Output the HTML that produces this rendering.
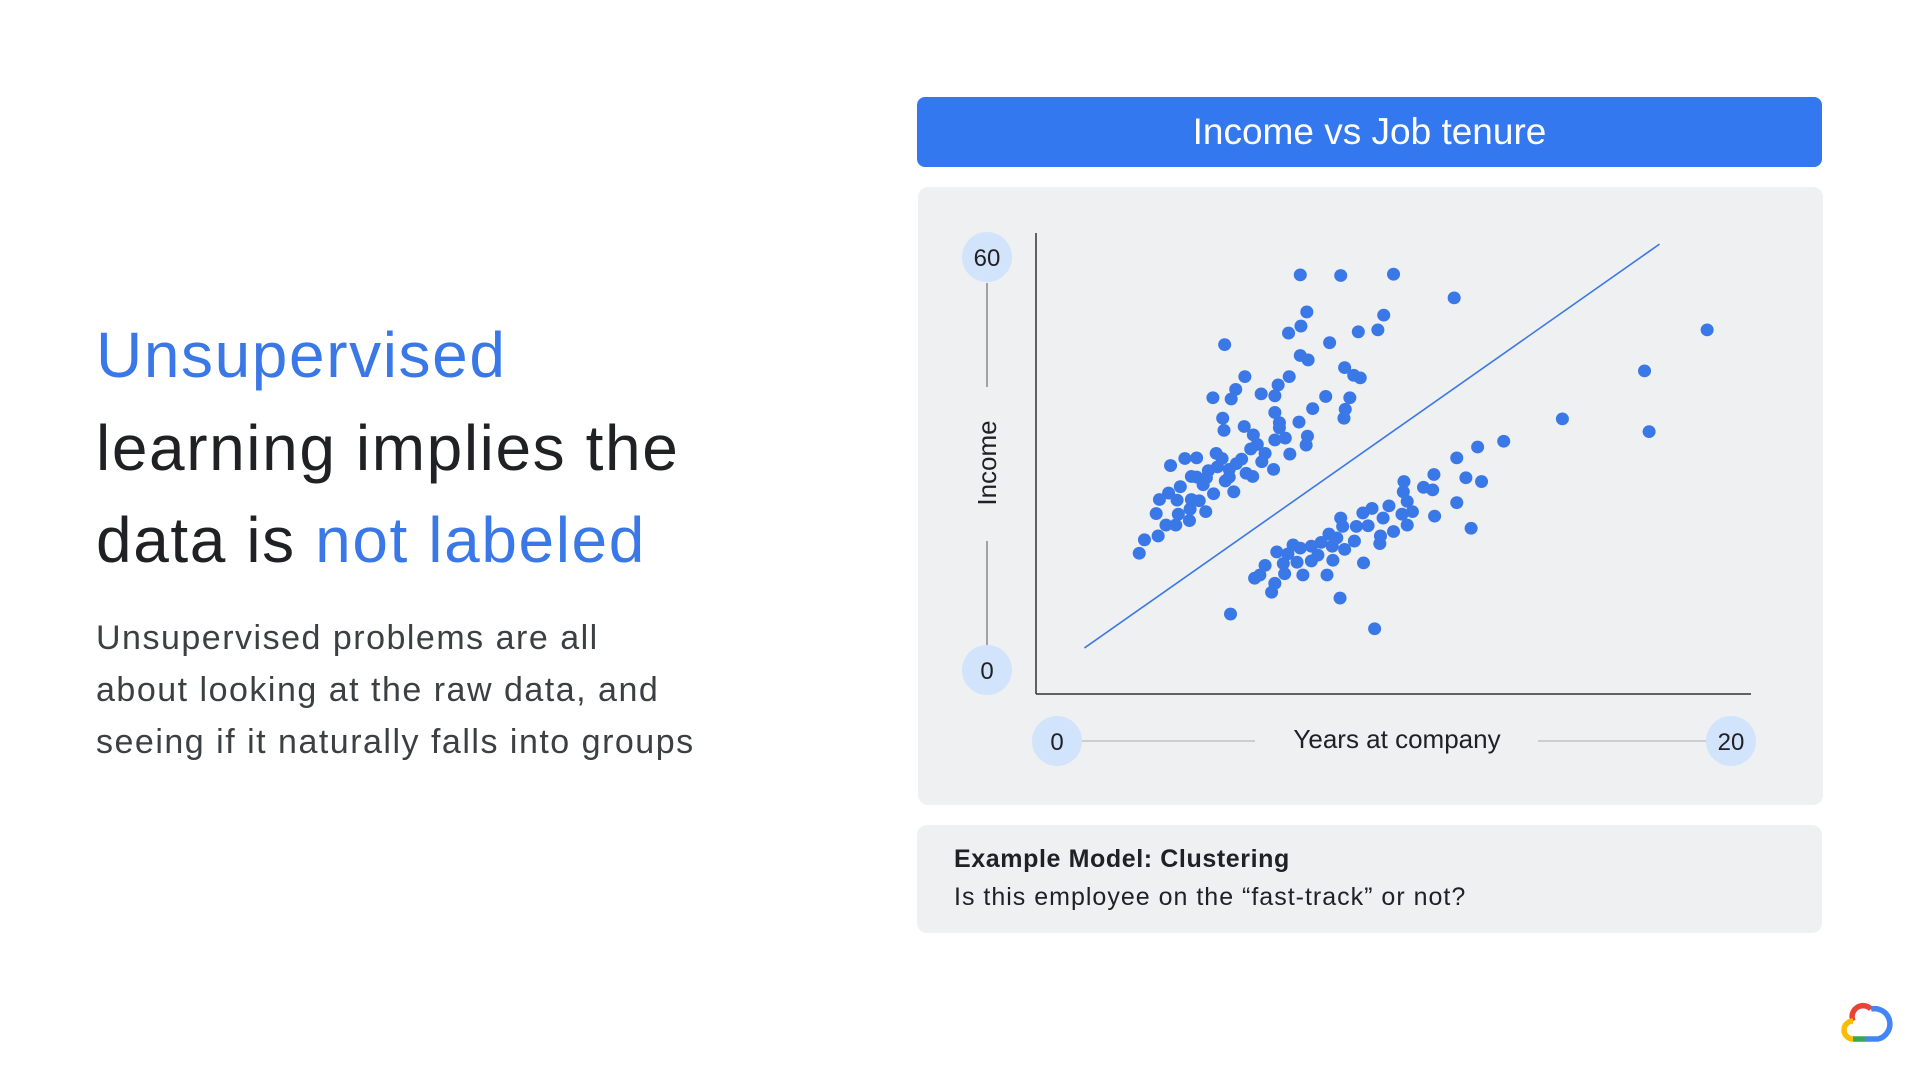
<!DOCTYPE html>
<html><head><meta charset="utf-8"><style>
body{margin:0;width:1920px;height:1080px;background:#fff;position:relative;overflow:hidden;font-family:"Liberation Sans",sans-serif;}
.h{position:absolute;left:96px;font-size:64px;letter-spacing:1.6px;color:#202124;line-height:92px;white-space:nowrap}
.b{color:#3b78e7}
.p{position:absolute;left:96px;top:612px;font-size:34px;letter-spacing:1.5px;line-height:52px;color:#3c4043;width:760px}
.title{position:absolute;left:917px;top:97px;width:905px;height:70px;background:#3478f0;border-radius:8px;color:#fff;font-size:37px;line-height:70px;text-align:center}
.panel{position:absolute;left:918px;top:187px;width:905px;height:618px;background:#eef0f2;border-radius:10px}
.cap{position:absolute;left:917px;top:825px;width:905px;height:108px;background:#eef0f2;border-radius:10px}
.cap div{position:absolute;left:37px;font-size:25px;color:#202124;white-space:nowrap}
</style></head><body>
<div class="h b" style="top:309px">Unsupervised</div>
<div class="h" style="top:402px">learning implies the</div>
<div class="h" style="top:494px">data is <span class="b">not labeled</span></div>
<div class="p">Unsupervised problems are all<br>about looking at the raw data, and<br>seeing if it naturally falls into groups</div>
<div class="title">Income vs Job tenure</div>
<div class="panel"></div>
<div class="cap"><div style="top:20px;font-weight:bold;letter-spacing:0.6px">Example Model: Clustering</div><div style="top:58px;letter-spacing:1px">Is this employee on the “fast-track” or not?</div></div>
<svg width="1920" height="1080" style="position:absolute;left:0;top:0" font-family="Liberation Sans, sans-serif">
<line x1="1036" y1="233" x2="1036" y2="694" stroke="#333" stroke-width="1.5"/>
<line x1="1036" y1="694" x2="1751" y2="694" stroke="#333" stroke-width="1.5"/>
<line x1="987" y1="283" x2="987" y2="387" stroke="#555" stroke-width="1"/>
<line x1="987" y1="541" x2="987" y2="645" stroke="#555" stroke-width="1"/>
<line x1="1081" y1="741" x2="1255" y2="741" stroke="#aaa" stroke-width="1"/>
<line x1="1538" y1="741" x2="1706" y2="741" stroke="#aaa" stroke-width="1"/>
<g fill="#d2e3fc"><circle cx="987" cy="257" r="25"/><circle cx="987" cy="670" r="25"/><circle cx="1057" cy="741" r="25"/><circle cx="1731" cy="741" r="25"/></g>
<g font-size="24" fill="#202124" text-anchor="middle"><text x="987" y="266">60</text><text x="987" y="679">0</text><text x="1057" y="750">0</text><text x="1731" y="750">20</text>
<text x="1397" y="748" font-size="26">Years at company</text>
<text transform="translate(996,463) rotate(-90)" font-size="26">Income</text></g>
<g transform="translate(898,79) scale(0.652,0.640)">
<line x1="286" y1="889" x2="1168" y2="258" stroke="#3b78e7" stroke-width="2.5"/>
<g fill="#3b78e7" id="d"></g>
</g>
<g fill="none" stroke-width="5.5">
<path d="M1853 1021 A11 11 0 0 1 1871 1009" stroke="#ea4335"/>
<path d="M1871 1009 A12 12 0 0 1 1878 1039 L1865 1039" stroke="#4285f4"/>
<path d="M1865 1039 L1853 1039" stroke="#34a853"/>
<path d="M1853 1039 A9 9 0 0 1 1853 1021" stroke="#fbbc04"/>
</g>
</svg>
<script>
var p=[[617,306],[679,307],[760,305],[853,342],[627,364],[745,369],[618,386],[599,397],[706,395],[736,392],[501,415],[662,412],[617,432],[629,439],[685,451],[699,463],[709,467],[532,465],[600,465],[583,478],[518,485],[483,498],[511,500],[557,492],[578,495],[656,496],[693,498],[636,515],[686,516],[684,530],[578,521],[498,530],[585,537],[615,536],[585,545],[500,549],[531,543],[545,556],[628,558],[578,564],[594,561],[551,571],[626,572],[541,578],[563,585],[601,586],[488,585],[440,593],[458,592],[497,593],[418,604],[576,610],[527,594],[519,601],[558,598],[508,610],[490,606],[476,612],[473,623],[450,621],[458,622],[534,616],[544,621],[502,628],[508,622],[415,647],[433,637],[468,634],[484,648],[515,645],[401,657],[428,658],[450,657],[462,659],[396,679],[430,680],[448,672],[472,676],[411,697],[426,697],[447,690],[378,720],[399,714],[370,741],
[1241,392],[1145,456],[1152,551],[1019,531],[929,566],[889,575],[857,592],[871,623],[895,629],[822,618],[776,629],[806,638],[820,642],[775,645],[857,662],[781,660],[753,667],[789,676],[823,683],[773,680],[727,671],[713,678],[744,686],[679,686],[682,699],[703,699],[721,698],[760,707],[781,697],[879,702],[740,714],[739,726],[700,722],[661,711],[673,717],[649,724],[634,730],[617,733],[606,728],[666,730],[685,735],[598,742],[581,739],[644,744],[667,752],[634,753],[612,755],[591,757],[714,756],[563,760],[555,775],[547,780],[593,773],[621,775],[658,775],[578,788],[573,802],[510,836],[678,811],[731,859]];
var g=document.getElementById('d'),s='';p.forEach(function(a){s+='<circle cx="'+a[0]+'" cy="'+a[1]+'" r="10"/>';});g.innerHTML=s;
</script>
</body></html>
